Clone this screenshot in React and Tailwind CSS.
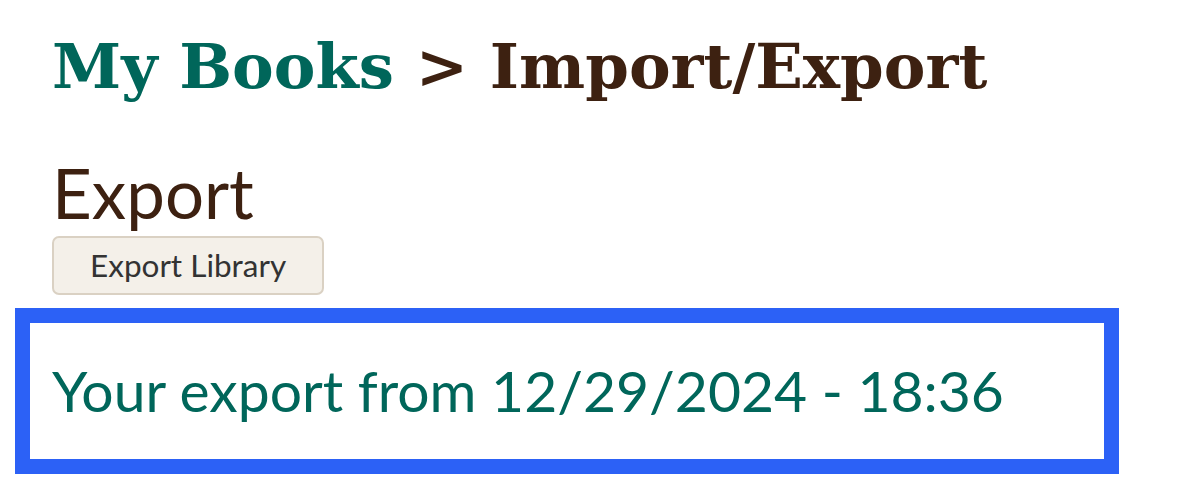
export default function App() {
  return (
    <div className="w-[1179px] h-[487px] bg-white overflow-hidden pt-[24px]" style={{ fontFamily: 'Lato, "Noto Sans", sans-serif' }}>
      <h1
        className="ml-[52px] text-[62.5px] leading-[84px] font-bold text-[#3d2111] whitespace-nowrap"
        style={{ fontFamily: '"DejaVu Serif", "Liberation Serif", serif' }}
      >
        <a className="text-[#00665a]">My Books</a> &gt; Import/Export
      </h1>
      <section className="mt-[50px]">
        <h2 className="ml-[52px] text-[69px] leading-[70px] text-[#3d2111]">Export</h2>
        <button className="ml-[52px] mt-[8px] h-[59px] px-[36px] rounded-[7px] border-2 border-[#dad1c3] bg-[#f4f0e9] text-[31.5px] text-[#333333]">
          Export Library
        </button>
        <div className="ml-[15px] mt-[13px] w-[1104px] h-[166px] border-[15px] border-[#2c61f6] flex items-center pl-[22px]">
          <span className="text-[57px] text-[#00665a] whitespace-nowrap">Your export from 12/29/2024 - 18:36</span>
        </div>
      </section>
    </div>
  );
}
